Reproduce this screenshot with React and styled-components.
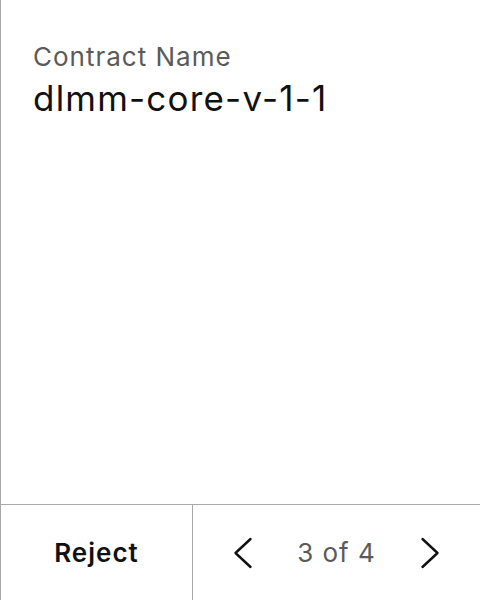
import styled, { createGlobalStyle } from "styled-components";

const GlobalStyle = createGlobalStyle`
  html, body {
    margin: 0;
    padding: 0;
    background: #fff;
  }
  body {
    font-family: Inter, "Noto Sans", sans-serif;
  }
`;

const Screen = styled.div`
  display: flex;
  flex-direction: column;
  width: 480px;
  height: 600px;
  box-sizing: border-box;
  border-left: 1px solid #aaaaaa;
`;

const Body = styled.div`
  flex: 1;
  padding: 42px 32px 0;
`;

const Label = styled.div`
  font-size: 26px;
  letter-spacing: 1px;
  color: #5a5a5a;
  line-height: 30px;
`;

const Value = styled.div`
  margin-top: 5px;
  font-size: 35px;
  letter-spacing: 1.2px;
  color: #111;
  line-height: 42px;
`;

const Footer = styled.div`
  display: flex;
  height: 95px;
  border-top: 1px solid #aaaaaa;
`;

const RejectButton = styled.button`
  width: 192px;
  border: none;
  border-right: 1px solid #aaaaaa;
  background: none;
  font-family: inherit;
  font-size: 26px;
  letter-spacing: 1px;
  font-weight: 600;
  color: #111;
  padding: 0;
`;

const Pager = styled.div`
  flex: 1;
  display: flex;
  align-items: center;
  justify-content: space-between;
  padding: 0 28px;
`;

const Arrow = styled.button`
  width: 44px;
  height: 44px;
  display: flex;
  align-items: center;
  justify-content: center;
  border: none;
  background: none;
  padding: 0;
  color: #111;
`;

const Count = styled.span`
  font-size: 26px;
  letter-spacing: 1px;
  color: #5a5a5a;
`;

const Chevron = ({ dir }) => (
  <svg width="20" height="32" viewBox="0 0 20 32" fill="none">
    <path
      d={dir === "left" ? "M17.5 2 L2.5 16 L17.5 30" : "M2.5 2 L17.5 16 L2.5 30"}
      stroke="currentColor"
      strokeWidth="2.4"
      strokeLinecap="round"
      strokeLinejoin="round"
    />
  </svg>
);

export default function App() {
  return (
    <>
      <GlobalStyle />
      <Screen>
        <Body>
          <Label>Contract Name</Label>
          <Value>dlmm-core-v-1-1</Value>
        </Body>
        <Footer>
          <RejectButton>Reject</RejectButton>
          <Pager>
            <Arrow aria-label="Previous">
              <Chevron dir="left" />
            </Arrow>
            <Count>3 of 4</Count>
            <Arrow aria-label="Next">
              <Chevron dir="right" />
            </Arrow>
          </Pager>
        </Footer>
      </Screen>
    </>
  );
}
